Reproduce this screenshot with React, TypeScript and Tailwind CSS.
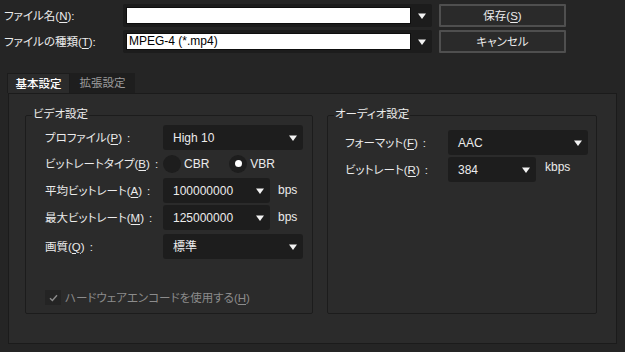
import React from "react"

const font = "font-['Liberation_Sans','Noto_Sans_CJK_JP',sans-serif] [font-feature-settings:'palt']"

function K({ c }: { c: string }) {
	return <span className="underline underline-offset-2 decoration-1">{c}</span>
}

function Colon() {
	return <span className="ml-[5px]">:</span>
}

function Arrow() {
	return (
		<svg width="8" height="6" viewBox="0 0 8 6" className="shrink-0">
			<path d="M0 0.5h8L4 6z" fill="#f2f2f2" />
		</svg>
	)
}

function Combo({ value }: { value: string }) {
	return (
		<div className="flex items-center w-[309px] h-[23px] bg-[#1c1c1c] rounded-[2px] pl-[3px]">
			<div className="w-[285px] h-[17px] bg-white border border-[#0e0e0e] text-black text-[12px] leading-[15px] pl-[2px]">
				{value}
			</div>
			<div className="flex-1 flex justify-center">
				<Arrow />
			</div>
		</div>
	)
}

function Btn({ children }: { children: React.ReactNode }) {
	return (
		<div className="ml-[7px] w-[127px] h-[23px] border-2 border-[#4f4f4f] bg-[#2a2a2a] rounded-[1px] flex items-center justify-center">
			{children}
		</div>
	)
}

function Select({ value, w }: { value: string; w: string }) {
	return (
		<div className={`${w} h-[25px] bg-[#1d1d1d] rounded-[3px] flex items-center justify-between pl-[10px] pr-[6px] text-[12px]`}>
			<span>{value}</span>
			<Arrow />
		</div>
	)
}

function Radio({ on, label }: { on?: boolean; label: string }) {
	return (
		<div className="flex items-center text-[12px]">
			<div className="w-[18px] h-[18px] rounded-full bg-[#1d1d1d] flex items-center justify-center">
				{on && <div className="w-[7px] h-[7px] rounded-full bg-white" />}
			</div>
			<span className="ml-[3px]">{label}</span>
		</div>
	)
}

function Row({ label, lw, mt, children }: { label: React.ReactNode; lw: string; mt?: string; children: React.ReactNode }) {
	return (
		<div className={`flex items-center h-[25px] ${mt ?? ""}`}>
			<div className={`${lw} whitespace-nowrap`}>{label}</div>
			{children}
		</div>
	)
}

function Group({ title, w, children, className }: { title: string; w: string; children: React.ReactNode; className?: string }) {
	return (
		<div className={`relative ${w} h-[199px] border border-[#1c1c1c] rounded-[2px] ${className ?? ""}`}>
			<span className="absolute left-[6px] -top-[9px] px-[1px] bg-[#2b2b2b] leading-[14px]">{title}</span>
			{children}
		</div>
	)
}

export default function App() {
	return (
		<div className={`w-[625px] h-[352px] bg-[#252525] text-[#ececec] text-[11.5px] leading-[14px] overflow-hidden ${font}`}>
			<div className="pl-[4px] pt-[4px]">
				<div className="flex items-center h-[23px]">
					<div className="w-[119px] whitespace-nowrap">
						ファイル名(<K c="N" />):
					</div>
					<Combo value="" />
					<Btn>
						保存(<K c="S" />)
					</Btn>
				</div>
				<div className="flex items-center h-[23px] mt-[3px]">
					<div className="w-[119px] whitespace-nowrap">
						ファイルの種類(<K c="T" />):
					</div>
					<Combo value="MPEG-4 (*.mp4)" />
					<Btn>キャンセル</Btn>
				</div>
			</div>

			<div className="flex ml-[7px] mt-[20px] h-[20px]">
				<div className="w-[63px] bg-[#2b2b2b] border-t border-l border-r border-[#1c1c1c] flex items-center justify-center text-white font-medium">
					基本設定
				</div>
				<div className="w-[65px] bg-[#1e1e1e] flex items-center justify-center text-[#9b9b9b]">拡張設定</div>
			</div>

			<div className="ml-[8px] w-[609px] h-[251px] bg-[#2b2b2b] border border-[#1b1b1b] flex pl-[16px] pt-[21px]">
				<Group title="ビデオ設定" w="w-[288px]">
					<div className="flex flex-col pl-[19px] pt-[9px]">
						<Row lw="w-[118px]" label={<>プロファイル(<K c="P" />)<Colon /></>}>
							<Select value="High 10" w="w-[140px]" />
						</Row>
						<Row lw="w-[118px]" mt="mt-[1px]" label={<>ビットレートタイプ(<K c="B" />)<Colon /></>}>
							<div className="flex gap-[20px]">
								<Radio label="CBR" />
								<Radio on label="VBR" />
							</div>
						</Row>
						<Row lw="w-[118px]" mt="mt-[2px]" label={<>平均ビットレート(<K c="A" />)<Colon /></>}>
							<Select value="100000000" w="w-[107px]" />
							<span className="ml-[8px] mb-[2px] text-[12px]">bps</span>
						</Row>
						<Row lw="w-[118px]" mt="mt-[2px]" label={<>最大ビットレート(<K c="M" />)<Colon /></>}>
							<Select value="125000000" w="w-[107px]" />
							<span className="ml-[8px] mb-[2px] text-[12px]">bps</span>
						</Row>
						<Row lw="w-[118px]" mt="mt-[4px]" label={<>画質(<K c="Q" />)<Colon /></>}>
							<Select value="標準" w="w-[140px]" />
						</Row>
						<div className="flex items-center h-[15px] mt-[31px] text-[#8c8c8c]">
							<div className="w-[16px] h-[15px] bg-[#242424] flex items-center justify-center">
								<svg width="9" height="8" viewBox="0 0 9 8">
									<path d="M1 4.2l2.4 2.3L8 1.2" stroke="#8c8c8c" strokeWidth="1.4" fill="none" />
								</svg>
							</div>
							<span className="ml-[4px] whitespace-nowrap">
								ハードウェアエンコードを使用する(<K c="H" />)
							</span>
						</div>
					</div>
				</Group>

				<Group title="オーディオ設定" w="w-[270px]" className="ml-[14px]">
					<div className="flex flex-col pl-[17px] pt-[14px]">
						<Row lw="w-[103px]" label={<>フォーマット(<K c="F" />)<Colon /></>}>
							<Select value="AAC" w="w-[140px]" />
						</Row>
						<Row lw="w-[103px]" mt="mt-[2px]" label={<>ビットレート(<K c="R" />)<Colon /></>}>
							<Select value="384" w="w-[88px]" />
							<span className="ml-[9px] mb-[5px] text-[12px]">kbps</span>
						</Row>
					</div>
				</Group>
			</div>
		</div>
	)
}
